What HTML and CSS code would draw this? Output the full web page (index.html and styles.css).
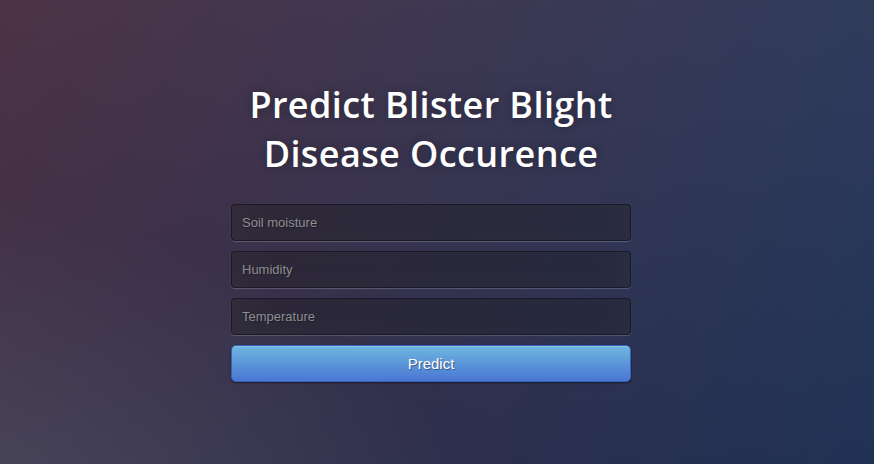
FILE: index.html
```html
<!DOCTYPE html>
<html lang="en">
<head>
<meta charset="utf-8">
<title>Predict Blister Blight Disease Occurence</title>
<link rel="stylesheet" href="styles.css">
</head>
<body>
<main class="page">
  <div class="login">
    <h1 class="title">Predict Blister Blight Disease Occurence</h1>
    <form class="form">
      <input class="field" type="text" name="soil" placeholder="Soil moisture">
      <input class="field" type="text" name="humidity" placeholder="Humidity">
      <input class="field" type="text" name="temperature" placeholder="Temperature">
      <button class="btn" type="button">Predict</button>
    </form>
  </div>
</main>
</body>
</html>
```

FILE: styles.css
```css
html, body {
  margin: 0;
  height: 100%;
}
body {
  font-family: "Open Sans", "Liberation Sans", sans-serif;
  background-color: #092756;
  background-image:
    radial-gradient(ellipse farthest-corner at 0% 100%, rgba(104,128,138,.4) 10%, rgba(138,114,76,0) 40%),
    linear-gradient(to bottom, rgba(57,173,219,.25) 0%, rgba(42,60,87,.4) 100%),
    linear-gradient(135deg, #670d10 0%, #092756 100%);
  background-repeat: no-repeat;
  background-size: calc(100% + 400px) calc(100% + 340px);
  background-position: -200px -170px;
  overflow: hidden;
}
.page {
  display: flex;
  justify-content: flex-start;
  padding-left: 231px;
  padding-top: 80px;
}
.login {
  width: 400px;
}
.title {
  margin: 0 0 26px;
  font-size: 36px;
  font-weight: 600;
  line-height: 49px;
  letter-spacing: 0.4px;
  color: #fff;
  text-align: center;
  text-shadow: 0 0 10px rgba(0,0,0,0.3);
}
.form {
  display: flex;
  flex-direction: column;
  margin: 0;
}
.field {
  box-sizing: border-box;
  width: 400px;
  height: 37px;
  margin: 0 0 10px;
  padding: 10px;
  font-family: "Liberation Sans", Arial, sans-serif;
  font-size: 13px;
  color: #fff;
  text-shadow: 1px 1px 1px rgba(0,0,0,0.3);
  background: rgba(0,0,0,0.3);
  border: 1px solid rgba(0,0,0,0.3);
  border-radius: 4px;
  outline: none;
  box-shadow: inset 0 -5px 45px rgba(100,100,100,0.2), 0 1px 1px rgba(255,255,255,0.2);
}
.field::placeholder {
  color: #8e8d92;
}
.btn {
  box-sizing: border-box;
  width: 400px;
  height: 37px;
  padding: 9px 14px;
  font-family: "Liberation Sans", Arial, sans-serif;
  font-size: 15px;
  color: #fff;
  text-align: center;
  text-shadow: 1px 1px 1px rgba(0,0,0,0.4);
  background-color: #4a77d4;
  background-image: linear-gradient(to bottom, #6eb6de, #4a77d4);
  border: 1px solid #3762bc;
  border-radius: 5px;
  box-shadow: inset 0 1px 0 rgba(255,255,255,0.2), 0 1px 2px rgba(0,0,0,0.5);
  cursor: pointer;
}
```
